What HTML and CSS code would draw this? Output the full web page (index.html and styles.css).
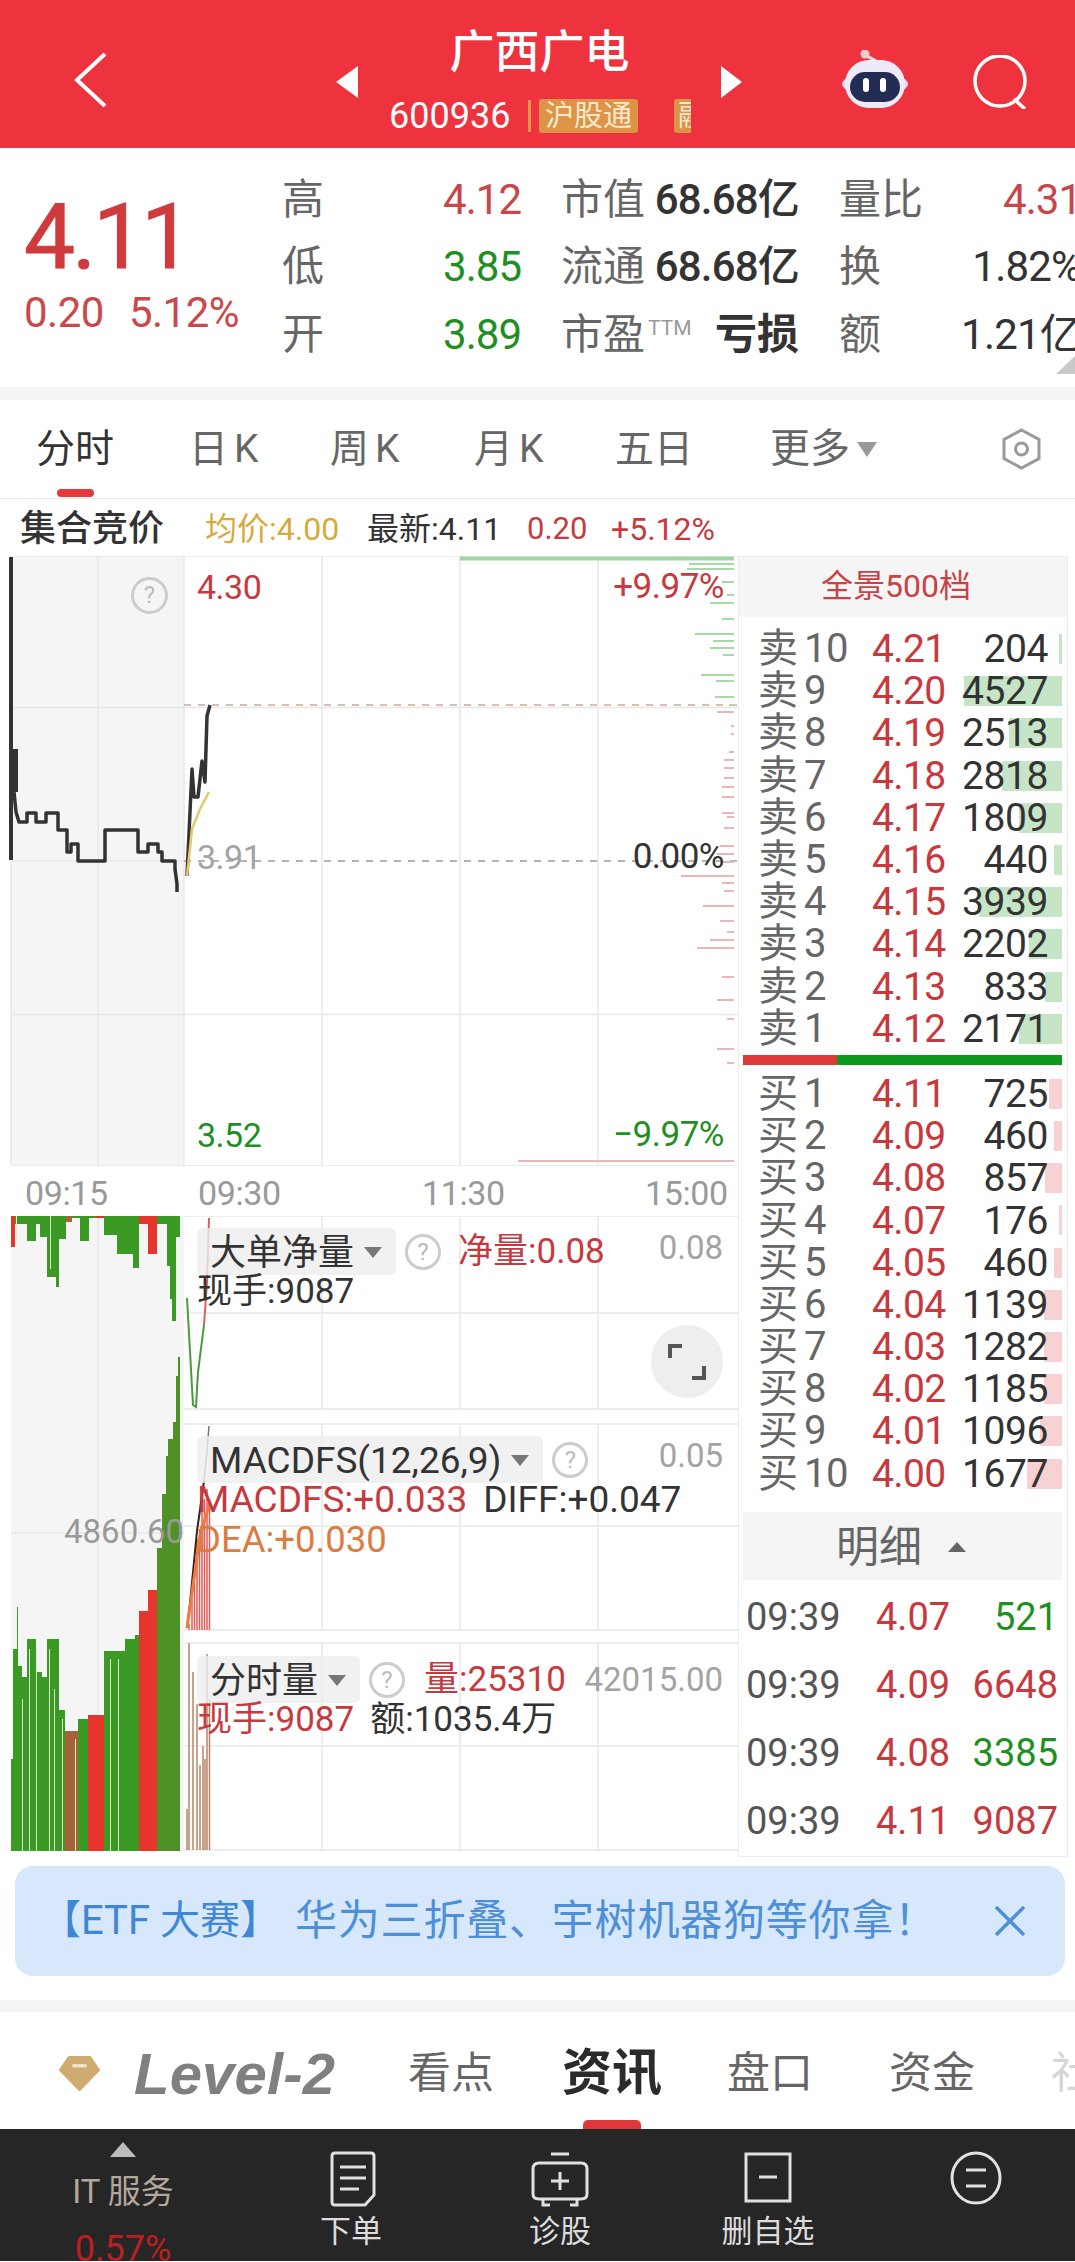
FILE: index.html
```html
<!DOCTYPE html>
<html lang="zh">
<head>
<meta charset="utf-8">
<title>广西广电</title>
<link rel="stylesheet" href="styles.css">
</head>
<body>
<div class="page">
  <header class="nav">
    <svg class="back" viewBox="0 0 33 56"><path d="M31 2 3 28l28 26"/></svg>
    <span class="arrow arrow-l"></span>
    <div class="stock">
      <div class="stock-name">广西广电</div>
      <div class="stock-code"><span class="code">600936</span><span class="code-sep"></span><span class="badge">沪股通</span><span class="badge badge-cut">融资</span></div>
    </div>
    <span class="arrow arrow-r"></span>
    <svg class="robot" viewBox="0 0 66 60">
      <path class="robot-ant" d="M23 4C26 8 30 8 34 11"/>
      <circle class="robot-ball" cx="23" cy="4" r="4.500"/>
      <ellipse class="robot-ear" cx="33" cy="34" rx="33" ry="12"/>
      <rect class="robot-head" x="3" y="10" width="60" height="48" rx="24"/>
      <rect class="robot-face" x="8" y="22" width="50" height="30" rx="15"/>
      <rect class="robot-eye" x="21" y="28" width="6" height="14" rx="3"/>
      <rect class="robot-eye" x="38" y="28" width="6" height="14" rx="3"/>
    </svg>
    <svg class="search" viewBox="0 0 56 54"><circle cx="28" cy="26" r="25"/><path d="M42 44l11 10"/></svg>
  </header>

  <section class="quote">
    <div class="price">
      <div class="price-now">4.11</div>
      <div class="price-chg"><span>0.20</span><span>5.12%</span></div>
    </div>
    <div class="stats">
      <div class="stat"><span class="k">高</span><span class="v red">4.12</span></div>
      <div class="stat"><span class="k">市值</span><span class="v dark">68.68亿</span></div>
      <div class="stat"><span class="k">量比</span><span class="v red">4.31</span></div>
      <div class="stat"><span class="k">低</span><span class="v green">3.85</span></div>
      <div class="stat"><span class="k">流通</span><span class="v dark">68.68亿</span></div>
      <div class="stat"><span class="k">换</span><span class="v plain">1.82%</span></div>
      <div class="stat"><span class="k">开</span><span class="v green">3.89</span></div>
      <div class="stat"><span class="k">市盈<sup class="ttm">TTM</sup></span><span class="v dark strong">亏损</span></div>
      <div class="stat"><span class="k">额</span><span class="v plain">1.21亿</span></div>
    </div>
    <span class="corner"></span>
  </section>
  <div class="band"></div>

  <nav class="tabs">
    <div class="tab tab-on">分时<i class="tab-line"></i></div>
    <div class="tab tab-k">日K</div>
    <div class="tab tab-k">周K</div>
    <div class="tab tab-k">月K</div>
    <div class="tab">五日</div>
    <div class="tab tab-more">更多<i class="caret"></i></div>
    <svg class="hex" viewBox="0 0 43 42"><path d="M21.500 2 39 11.500v19L21.500 40 4 30.500v-19z"/><circle cx="21.500" cy="21" r="6"/></svg>
  </nav>

  <div class="info">
    <span class="info-title">集合竞价</span>
    <span class="info-avg">均价:4.00</span>
    <span class="info-new">最新:4.11</span>
    <span class="info-chg">0.20</span>
    <span class="info-pct">+5.12%</span>
  </div>

  <div class="board">
    <div class="charts">
      <div class="main-chart">
        <svg class="fill" viewBox="0 557 738 610">
          <rect class="shade" x="11" y="557" width="173" height="610"/>
          <path class="grid" d="M11 557V1167M98 557V1167M184 557V1167M322 557V1167M460 557V1167M598 557V1167M11 557H738M11 708.500H738M11 862H184M11 1015.500H738M11 1167H738"/>
          <path class="dash" d="M184 862H738"/>
          <path class="dash dash-warm" d="M184 706H738"/>
          <path class="depth-green-top" d="M460 559.500H734"/>
          <path class="depth-green" d="M689 565H734M687 570H734M722 583H734M727 596H734M710 604H734M722 620H734M695 635H734M713 642H734M710 649H734M723 656H734M701 676H734M716 682H734M715 698H734M729 706H734"/>
          <path class="depth-red" d="M717 713H734M731 727H734M731 735H734M729 753H734M724 761H734M724 769H734M724 779H734M722 788H734M722 798H734M722 814H734M727 818H734M724 829H734M720 847H734M717 855H734M720 863H734M681 877H734M722 884H734M724 892H734M703 907H734M720 922H734M727 933H734M710 941H734M697 949H734M722 978H734M717 1001H734M727 1020H734M717 1050H734M727 1064H734M518 1162H734"/>
          <path class="line-main" d="M11 558V861"/>
          <path class="line-main line-block" d="M14 750V793"/>
          <path class="line-price" d="M14 793 16 813 19 823H27V814H36V823H46V814H58V831H67V853H71V845H78V862H105V831H138V853H148V845H158V853H162V862H175V870L177 885V893"/>
          <path class="line-price" d="M187 877 192 770 194 798H198L202 762 205 783 207 717 210 706"/>
          <path class="line-avg" d="M187 877 192 830 200 810 209 793"/>
        </svg>
        <span class="lab lab-top lab-l red">4.30</span>
        <span class="lab lab-top lab-r red">+9.97%</span>
        <span class="lab lab-mid lab-l grey">3.91</span>
        <span class="lab lab-mid lab-r dark">0.00%</span>
        <span class="lab lab-bot lab-l green">3.52</span>
        <span class="lab lab-bot lab-r green">−9.97%</span>
        <span class="help help-main">?</span>
      </div>
      <div class="axis"><span>09:15</span><span>09:30</span><span>11:30</span><span>15:00</span></div>
      <div class="sub-charts">
        <svg class="fill" viewBox="0 1217 738 641">
          <rect class="shade" x="11" y="1217" width="173" height="635"/>
          <path class="grid" d="M98 1217V1852M322 1217V1410M460 1217V1410M598 1217V1410M322 1425V1631M460 1425V1631M598 1425V1631M322 1644V1852M460 1644V1852M598 1644V1852M184 1217H738M184 1314H738M184 1410H738M184 1425H738M184 1527H738M184 1631H738M184 1644H738M184 1747H738M184 1851H738M11 1534H184"/>
          <path class="bar-green" d="M11 1217H180V1238H176V1322H172V1300H170V1267H167V1225H157V1217H139V1269H133V1255H117V1236H104V1219H89V1242H80V1219H72V1223H66V1240H59V1288H56V1278H47V1238H40V1225H36V1242H27V1225H15V1217Z"/>
          <path class="bar-red" d="M11 1217H15V1248H11ZM95 1217H104V1219H95ZM139 1217H148V1225H139ZM148 1217H157V1255H148Z"/>
          <path class="bar-brown" d="M66 1217H72V1223H66Z"/>
          <path class="bar-green" d="M11 1852V1760H13V1650H17V1608H18V1667H22V1678H27V1640H36V1673H42V1678H47V1640H59V1711H65V1852ZM78 1852V1720H88V1852ZM104 1852V1652H125V1640H135V1636H139V1852Z"/>
          <path class="bar-brown" d="M65 1852V1732H78V1852ZM139 1852V1636H157V1549H162V1852Z"/>
          <path class="bar-red" d="M88 1852V1716H104V1852ZM139 1852V1612H148V1591H157V1852Z"/>
          <path class="bar-olive" d="M157 1852V1549H162V1495H166V1457H168V1440H173V1423H176V1377H178V1358H180V1852Z"/>
          <path class="bar-gap" d="M22.500 1700V1852M29.500 1650V1852M36.500 1650V1852M49.500 1650V1852M54.500 1690V1852M62.500 1720V1852M75.500 1740V1852M110.500 1660V1852M118.500 1660V1852M50.500 1217V1270M16.500 1217V1240"/>
          <path class="curve-green" d="M187 1299 193 1406 196 1408 198 1373 204 1326"/>
          <path class="curve-red" d="M204 1326 207 1284 209 1219"/>
          <path class="macd-bars" d="M189 1631V1625M192 1631V1600M194.500 1631V1575M197 1631V1540M199.500 1631V1530M202 1631V1510M204.500 1631V1500M207 1631V1490M209.500 1631V1500"/>
          <path class="curve-black" d="M187 1629 190 1604 197 1532 200 1511 204 1482"/>
          <path class="curve-grey" d="M204 1482 207 1452 209 1427"/>
          <path class="curve-orange" d="M187 1629 200 1537 210 1503"/>
          <path class="vol-bars" d="M187 1851V1810M189 1851V1644M193 1851V1673M197 1851V1705M200 1851V1766M203 1851V1747M205 1851V1760M207 1851V1655M209.500 1851V1700"/>
        </svg>
        <span class="lab-left">4860.60</span>

        <div class="legend legend-1">
          <div class="legend-top">
            <span class="pill">大单净量<i class="pill-caret"></i></span>
            <span class="help">?</span>
            <span class="lg red">净量:0.08</span>
          </div>
          <div class="lg dark">现手:9087</div>
        </div>
        <span class="scale scale-1">0.08</span>
        <div class="expand"><svg viewBox="0 0 38 38"><path d="M2 15V3H14M36 23V35H24"/></svg></div>

        <div class="legend legend-2">
          <div class="legend-top">
            <span class="pill">MACDFS(12,26,9)<i class="pill-caret"></i></span>
            <span class="help">?</span>
          </div>
          <div class="legend-row"><span class="lg red">MACDFS:+0.033</span><span class="lg dark">DIFF:+0.047</span></div>
          <div class="lg orange legend-dea">DEA:+0.030</div>
        </div>
        <span class="scale scale-2">0.05</span>

        <div class="legend legend-3">
          <div class="legend-top">
            <span class="pill">分时量<i class="pill-caret"></i></span>
            <span class="help">?</span>
            <span class="lg red">量:25310</span>
          </div>
          <div class="legend-row"><span class="lg red">现手:9087</span><span class="lg dark">额:1035.4万</span></div>
        </div>
        <span class="scale scale-3">42015.00</span>
      </div>
    </div>

    <aside class="book">
      <div class="book-head">全景500档</div>
      <div class="levels levels-sell">
        <div class="lv"><i class="lv-bar bar-sell" style="width:3px"></i><span class="lv-name">卖<b>10</b></span><span class="lv-price">4.21</span><span class="lv-qty">204</span></div>
        <div class="lv"><i class="lv-bar bar-sell" style="width:98px"></i><span class="lv-name">卖<b>9</b></span><span class="lv-price">4.20</span><span class="lv-qty">4527</span></div>
        <div class="lv"><i class="lv-bar bar-sell" style="width:53px"></i><span class="lv-name">卖<b>8</b></span><span class="lv-price">4.19</span><span class="lv-qty">2513</span></div>
        <div class="lv"><i class="lv-bar bar-sell" style="width:60px"></i><span class="lv-name">卖<b>7</b></span><span class="lv-price">4.18</span><span class="lv-qty">2818</span></div>
        <div class="lv"><i class="lv-bar bar-sell" style="width:43px"></i><span class="lv-name">卖<b>6</b></span><span class="lv-price">4.17</span><span class="lv-qty">1809</span></div>
        <div class="lv"><i class="lv-bar bar-sell" style="width:8px"></i><span class="lv-name">卖<b>5</b></span><span class="lv-price">4.16</span><span class="lv-qty">440</span></div>
        <div class="lv"><i class="lv-bar bar-sell" style="width:83px"></i><span class="lv-name">卖<b>4</b></span><span class="lv-price">4.15</span><span class="lv-qty">3939</span></div>
        <div class="lv"><i class="lv-bar bar-sell" style="width:33px"></i><span class="lv-name">卖<b>3</b></span><span class="lv-price">4.14</span><span class="lv-qty">2202</span></div>
        <div class="lv"><i class="lv-bar bar-sell" style="width:17px"></i><span class="lv-name">卖<b>2</b></span><span class="lv-price">4.13</span><span class="lv-qty">833</span></div>
        <div class="lv"><i class="lv-bar bar-sell" style="width:43px"></i><span class="lv-name">卖<b>1</b></span><span class="lv-price">4.12</span><span class="lv-qty">2171</span></div>
      </div>
      <div class="ratio"><i class="ratio-red"></i><i class="ratio-green"></i></div>
      <div class="levels">
        <div class="lv"><i class="lv-bar bar-buy" style="width:13px"></i><span class="lv-name">买<b>1</b></span><span class="lv-price">4.11</span><span class="lv-qty">725</span></div>
        <div class="lv"><i class="lv-bar bar-buy" style="width:8px"></i><span class="lv-name">买<b>2</b></span><span class="lv-price">4.09</span><span class="lv-qty">460</span></div>
        <div class="lv"><i class="lv-bar bar-buy" style="width:17px"></i><span class="lv-name">买<b>3</b></span><span class="lv-price">4.08</span><span class="lv-qty">857</span></div>
        <div class="lv"><i class="lv-bar bar-buy" style="width:3px"></i><span class="lv-name">买<b>4</b></span><span class="lv-price">4.07</span><span class="lv-qty">176</span></div>
        <div class="lv"><i class="lv-bar bar-buy" style="width:8px"></i><span class="lv-name">买<b>5</b></span><span class="lv-price">4.05</span><span class="lv-qty">460</span></div>
        <div class="lv"><i class="lv-bar bar-buy" style="width:18px"></i><span class="lv-name">买<b>6</b></span><span class="lv-price">4.04</span><span class="lv-qty">1139</span></div>
        <div class="lv"><i class="lv-bar bar-buy" style="width:18px"></i><span class="lv-name">买<b>7</b></span><span class="lv-price">4.03</span><span class="lv-qty">1282</span></div>
        <div class="lv"><i class="lv-bar bar-buy" style="width:18px"></i><span class="lv-name">买<b>8</b></span><span class="lv-price">4.02</span><span class="lv-qty">1185</span></div>
        <div class="lv"><i class="lv-bar bar-buy" style="width:22px"></i><span class="lv-name">买<b>9</b></span><span class="lv-price">4.01</span><span class="lv-qty">1096</span></div>
        <div class="lv"><i class="lv-bar bar-buy" style="width:35px"></i><span class="lv-name">买<b>10</b></span><span class="lv-price">4.00</span><span class="lv-qty">1677</span></div>
      </div>
      <div class="detail-head">明细<i class="detail-caret"></i></div>
      <div class="ticks">
        <div class="tick"><span class="tick-time">09:39</span><span class="tick-price">4.07</span><span class="tick-qty green">521</span></div>
        <div class="tick"><span class="tick-time">09:39</span><span class="tick-price">4.09</span><span class="tick-qty red">6648</span></div>
        <div class="tick"><span class="tick-time">09:39</span><span class="tick-price">4.08</span><span class="tick-qty green">3385</span></div>
        <div class="tick"><span class="tick-time">09:39</span><span class="tick-price">4.11</span><span class="tick-qty red">9087</span></div>
      </div>
    </aside>
  </div>

  <div class="banner">
    <span class="banner-lead">【ETF 大赛】</span>
    <span class="banner-text">华为三折叠、宇树机器狗等你拿！</span>
    <svg class="banner-x" viewBox="0 0 32 30"><path d="M2 1 30 29M30 1 2 29"/></svg>
  </div>
  <div class="band band-2"></div>

  <nav class="news-tabs">
    <svg class="gem" viewBox="0 0 41 35"><path d="M10 1.500H31L39.500 14 20.500 33.500 1.500 14Z"/><rect x="13" y="8" width="15" height="3.500" rx="1.700"/></svg>
    <span class="level2">Level-2</span>
    <span class="news-tab news-first">看点</span>
    <span class="news-tab news-on">资讯<i class="news-line"></i></span>
    <span class="news-tab">盘口</span>
    <span class="news-tab">资金</span>
    <span class="news-tab news-fade">社</span>
  </nav>

  <footer class="foot">
    <div class="foot-sector">
      <i class="foot-tri"></i>
      <span class="foot-name">IT 服务</span>
      <span class="foot-pct">0.57%</span>
    </div>
    <div class="foot-item">
      <svg class="foot-icon" viewBox="0 0 60 56"><path d="M11 5Q11 2 14 2H50Q53 2 53 5V44L44 54H14Q11 54 11 51Z"/><path d="M19 16H45M19 27H45M19 38H38"/></svg>
      <span class="foot-label">下单</span>
    </div>
    <div class="foot-item">
      <svg class="foot-icon" viewBox="0 0 60 56"><path d="M21 3H39"/><path d="M9 12Q3 12 3 18V43Q3 48 9 48H51Q57 48 57 43V18Q57 12 51 12Z"/><path d="M30 21V39M21 30H39M13 49V54H20M47 49V54H40"/></svg>
      <span class="foot-label">诊股</span>
    </div>
    <div class="foot-item">
      <svg class="foot-icon" viewBox="0 0 60 56"><path d="M8 3H52V50H8Z"/><path d="M21 26H39"/></svg>
      <span class="foot-label">删自选</span>
    </div>
    <div class="foot-item">
      <svg class="foot-icon" viewBox="0 0 60 56"><ellipse cx="30" cy="27" rx="24" ry="25"/><path d="M20 19H40M20 35H40"/></svg>
    </div>
  </footer>
</div>
</body>
</html>
```

FILE: styles.css
```css
* { box-sizing: border-box; }
html, body { margin: 0; padding: 0; background: #fff; }
body {
  font-family: Roboto, "Noto Sans CJK SC", sans-serif;
  color: #333;
}
i { display: block; font-style: normal; }
.page { width: 1075px; height: 2262px; overflow: hidden; position: relative; }

.red { color: #c63a3f; }
.green { color: #1f8f24; }
.dark { color: #333; }
.grey { color: #a3a3a3; }
.orange { color: #dc7c42; }

/* nav */
.nav { display: flex; height: 148px; padding-left: 74px; background: #ee333e; border-bottom: 1px solid #d8424a; }
.back { width: 33px; height: 56px; margin-top: 52px; fill: none; stroke: #fff; stroke-width: 4; flex: none; }
.arrow { flex: none; width: 0; height: 0; margin-top: 66px; border-top: 16px solid transparent; border-bottom: 16px solid transparent; }
.arrow-l { margin-left: 229px; border-right: 22px solid #fff; }
.arrow-r { border-left: 21px solid #fff; }
.stock { width: 363px; flex: none; display: flex; flex-direction: column; }
.stock-name { margin-top: 26px; height: 54px; line-height: 54px; font-size: 45px; font-weight: 500; color: #fff; text-align: center; }
.stock-code { display: flex; align-items: center; height: 34px; margin-top: 19px; padding-left: 31px; width: 333px; overflow: hidden; color: #fff; }
.code { font-size: 36px; line-height: 34px; width: 124px; flex: none; }
.code-sep { width: 3px; height: 32px; margin: 0 8px 0 15px; background: #e2964a; flex: none; }
.badge { flex: none; width: 99px; height: 34px; line-height: 34px; text-align: center; font-size: 29px; border-radius: 3px; background: #dd9446; color: #fbe9cf; white-space: nowrap; }
.badge-cut { margin-left: 36px; text-align: left; padding-left: 4px; }
.robot { width: 66px; height: 60px; margin: 50px 0 0 100px; flex: none; }
.robot-ant { fill: none; stroke: #f0dfe6; stroke-width: 3; }
.robot-ball { fill: #f3c9cf; }
.robot-ear { fill: #e3d9ee; }
.robot-head { fill: #efeaf7; }
.robot-face { fill: #232c52; }
.robot-eye { fill: #fff; }
.search { width: 56px; height: 54px; margin: 55px 0 0 64px; fill: none; stroke: #fff; stroke-width: 3.5; flex: none; }

/* quote */
.quote { display: flex; height: 239px; position: relative; overflow: hidden; }
.price { width: 282px; flex: none; padding-left: 24px; }
.price-now { margin-top: 41px; height: 96px; line-height: 96px; font-size: 91px; letter-spacing: -3px; font-weight: 400; color: #cf3a3d; -webkit-text-stroke: 1px #cf3a3d; }
.price-chg { display: flex; gap: 25px; margin-top: 4px; font-size: 42px; letter-spacing: -0.500px; line-height: 48px; color: #c8484b; }
.stats { display: grid; grid-template-columns: 239px 238px 242px; column-gap: 40px; grid-auto-rows: 67.500px; padding-top: 18px; flex: none; }
.stat { display: flex; justify-content: space-between; align-items: center; white-space: nowrap; line-height: 56px; }
.k { font-size: 42px; color: #666; position: relative; }
.v { font-size: 42px; letter-spacing: -1px; }
.v.dark { font-weight: 500; letter-spacing: -0.800px; }
.v.plain { color: #333; letter-spacing: -0.800px; }
.v.red { color: #c94549; }
.v.strong { font-size: 42px; font-weight: 700; letter-spacing: 0; }
.ttm { position: absolute; left: 87px; top: 9px; font-size: 21px; line-height: 24px; color: #999; }
.corner { position: absolute; right: 0; bottom: 13px; width: 0; height: 0; border-left: 19px solid transparent; border-bottom: 18px solid #c9c9c9; }
.band { height: 13px; background: #f5f5f5; }

/* tabs */
.tabs { display: grid; grid-template-columns: 153px 141px 144px 141px 155px 1fr 43px; align-items: center; height: 99px; padding: 0 32px 0 36px; border-bottom: 1px solid #e6e6e6; position: relative; }
.tab { font-size: 39px; color: #666; line-height: 50px; display: flex; align-items: center; position: relative; white-space: nowrap; }
.tab-on { color: #333; }
.tab-k { letter-spacing: 6px; }
.tab-line { position: absolute; left: 21px; top: 65px; width: 37px; height: 8px; border-radius: 4px; background: #e8383d; }
.tab-more { font-size: 40px; }
.caret { margin-left: 7px; width: 0; height: 0; border-left: 10px solid transparent; border-right: 10px solid transparent; border-top: 15px solid #9a9a9a; }
.hex { width: 43px; height: 42px; fill: none; stroke: #999; stroke-width: 3; }

/* info */
.info { display: flex; align-items: center; height: 57px; padding: 3px 0 0 20px; font-size: 32px; line-height: 40px; white-space: nowrap; }
.info-title { font-size: 36px; font-weight: 500; width: 185px; }
.info-avg { color: #d5ab3e; width: 162px; }
.info-new { color: #333; width: 160px; }
.info-chg { color: #c63a3f; width: 84px; font-size: 31px; }
.info-pct { color: #c63a3f; }

/* board */
.board { display: flex; height: 1301px; }
.charts { width: 738px; flex: none; }
.main-chart { position: relative; height: 610px; }
.fill { position: absolute; left: 0; top: 0; width: 738px; height: 100%; display: block; }
.shade { fill: #f5f5f5; }
.grid { fill: none; stroke: #e8e8e8; stroke-width: 1.500; }
.dash { fill: none; stroke: #9b9b9b; stroke-width: 1.500; stroke-dasharray: 7 7; }
.dash-warm { stroke: #c7ad95; }
.depth-green-top { fill: none; stroke: #9fd59f; stroke-width: 4; }
.depth-green { fill: none; stroke: #a5d9a5; stroke-width: 2; }
.depth-red { fill: none; stroke: #ecb5b5; stroke-width: 2; }
.line-main { fill: none; stroke: #333; stroke-width: 4; }
.line-block { stroke-width: 8; }
.line-price { fill: none; stroke: #333; stroke-width: 3.500; stroke-linejoin: round; }
.line-avg { fill: none; stroke: #e6c76d; stroke-width: 2.500; }
.lab { position: absolute; line-height: 36px; font-size: 34px; letter-spacing: -0.500px; }
.lab-l { left: 197px; }
.lab-r { right: 14px; }
.lab-top { top: 13px; }
.lab-mid { top: 283px; }
.lab-bot { top: 561px; }
.lab-r.red, .lab-r.green, .lab-r.dark { font-size: 35px; }
.help { width: 36px; height: 36px; flex: none; border: 3px solid #ccc; border-radius: 50%; color: #bbb; font-size: 24px; line-height: 30px; text-align: center; }
.help-main { position: absolute; left: 131px; top: 21px; width: 37px; height: 37px; }
.axis { display: grid; grid-template-columns: 173px 224px 223px auto; height: 50px; padding: 3px 0 0 25px; align-items: center; font-size: 34px; line-height: 40px; letter-spacing: -0.400px; color: #999; }

.sub-charts { position: relative; height: 641px; }
.bar-green { fill: #3b9a24; }
.bar-red { fill: #e5352c; }
.bar-brown { fill: #a8623a; }
.bar-olive { fill: #4f9127; }
.bar-gap { fill: none; stroke: #d8efce; stroke-width: 1; }
.curve-green { fill: none; stroke: #4b9a3e; stroke-width: 2; }
.curve-red { fill: none; stroke: #d9605f; stroke-width: 2; }
.curve-black { fill: none; stroke: #3a1f1a; stroke-width: 2; }
.curve-grey { fill: none; stroke: #777; stroke-width: 1.500; }
.curve-orange { fill: none; stroke: #ef7a3b; stroke-width: 3; }
.macd-bars { fill: none; stroke: #e25a55; stroke-width: 1.500; }
.vol-bars { fill: none; stroke: #b98467; stroke-width: 1.500; }
.lab-left { position: absolute; left: 64px; top: 300px; line-height: 32px; font-size: 33px; color: #999; }

.legend { position: absolute; left: 197px; white-space: nowrap; }
.legend-1 { top: 12px; }
.legend-2 { top: 220px; }
.legend-3 { top: 440px; }
.legend-top { display: flex; align-items: center; gap: 9px; height: 47px; }
.pill { display: flex; align-items: center; height: 47px; line-height: 44px; padding: 2px 14px 0 13px; border-radius: 6px; background: rgba(238, 238, 238, 0.8); font-size: 36px; color: #333; }
.legend-2 .pill { font-size: 37px; }
.pill-caret { margin-left: 10px; width: 0; height: 0; border-left: 9px solid transparent; border-right: 9px solid transparent; border-top: 11px solid #777; }
.legend-1 .lg.red { margin-left: 8px; }
.legend-3 .legend-top .lg.red { margin-left: 10px; }
.lg { font-size: 35px; line-height: 34px; }
.legend-row { display: flex; gap: 16px; }
.legend-2 .legend-row .lg { font-size: 37px; }
.legend-dea { margin-top: 6px; font-size: 36.500px; }
.scale { position: absolute; right: 15px; font-size: 33px; line-height: 30px; color: #a3a3a3; }
.scale-1 { top: 17px; }
.scale-2 { top: 225px; }
.scale-3 { top: 449px; }
.expand { position: absolute; left: 651px; top: 109px; width: 72px; height: 73px; border-radius: 50%; background: #eeeeee; display: flex; align-items: center; justify-content: center; }
.expand svg { width: 38px; height: 38px; fill: none; stroke: #555; stroke-width: 4; }

/* book */
.book { width: 330px; flex: none; height: 1301px; border: 1px solid #ececec; overflow: hidden; }
.book-head { height: 60px; line-height: 58px; background: #f5f5f5; text-align: center; font-size: 32px; color: #c84345; padding-right: 14px; white-space: nowrap; }
.levels { display: flex; flex-direction: column; }
.levels-sell { margin-top: 11px; }
.lv { position: relative; display: flex; align-items: center; height: 42.200px; line-height: 38px; margin: 0 5px 0 4px; white-space: nowrap; }
.lv-bar { position: absolute; right: 0; top: 6px; height: 30px; }
.bar-sell { background: #c6e5c6; }
.bar-buy { background: #f8d2d2; }
.lv-name { position: relative; width: 129px; padding-left: 15px; flex: none; font-size: 40px; line-height: 38px; color: #666; display: flex; align-items: center; }
.lv-name b { font-weight: 400; font-size: 40px; margin-left: 6px; letter-spacing: -0.500px; }
.lv-price { position: relative; width: 71px; flex: none; font-size: 39px; letter-spacing: -0.600px; color: #c8383c; }
.lv-qty { position: relative; width: 105px; flex: none; text-align: right; font-size: 39px; letter-spacing: -0.400px; color: #333; }
.ratio { display: flex; height: 10px; margin: 5px 5px 8px 4px; }
.ratio-red { width: 94px; background: #df3a37; }
.ratio-green { flex: 1; background: #0c9a1c; }
.detail-head { display: flex; align-items: center; height: 68px; line-height: 56px; margin: 17px 5px 0 4px; padding: 2px 0 0 93px; background: #f4f4f4; font-size: 43px; color: #666; }
.detail-caret { margin-left: 26px; width: 0; height: 0; border-left: 9px solid transparent; border-right: 9px solid transparent; border-bottom: 10px solid #666; }
.ticks { margin-top: 3px; }
.tick { display: flex; align-items: center; height: 68px; line-height: 44px; padding-left: 7px; font-size: 38px; white-space: nowrap; }
.tick-time { width: 130px; color: #555; flex: none; }
.tick-price { width: 71px; color: #c8383c; flex: none; }
.tick-qty { width: 111px; text-align: right; flex: none; }

/* banner */
.banner { display: flex; align-items: center; height: 110px; line-height: 56px; margin: 9px 10px 0 15px; padding: 0 39px 0 26px; border-radius: 18px; background: #d8e8fc; white-space: nowrap; }
.banner-lead { width: 254px; flex: none; font-size: 40px; color: #3f86d6; }
.banner-text { flex: 1; font-size: 42px; letter-spacing: 0.800px; color: #4d8fd8; }
.banner-x { width: 32px; height: 30px; fill: none; stroke: #4d8fd8; stroke-width: 3.500; flex: none; }
.band-2 { margin-top: 24px; height: 12px; }

/* news tabs */
.news-tabs { display: flex; align-items: center; height: 117px; padding: 5px 0 0 59px; position: relative; white-space: nowrap; }
.gem { width: 41px; height: 35px; fill: #cfab70; stroke: #cfab70; stroke-width: 3; stroke-linejoin: round; flex: none; }
.gem rect { fill: #f0e2c8; stroke: none; }
.level2 { margin-left: 34px; width: 274px; font-family: "Liberation Sans", sans-serif; font-size: 58px; letter-spacing: 0.200px; font-weight: 700; font-style: italic; color: #808080; flex: none; }
.news-tab { width: 162px; flex: none; font-size: 43px; color: #666; position: relative; line-height: 60px; }
.news-first { width: 154px; }
.news-on { width: 165px; font-size: 50px; font-weight: 700; color: #2b2b2b; }
.news-fade { color: #d5d5d5; }
.news-line { position: absolute; left: 21px; top: 77px; width: 58px; height: 9px; border-radius: 5px 5px 0 0; background: #e0383a; }

/* foot */
.foot { display: grid; grid-template-columns: 246px 210px 208px 208px 208px; height: 132px; width: 1080px; background: #262626; position: relative; }
.foot-sector { display: flex; flex-direction: column; align-items: center; padding-top: 13px; overflow: hidden; height: 132px; }
.foot-tri { flex: none; width: 0; height: 0; border-left: 13px solid transparent; border-right: 13px solid transparent; border-bottom: 15px solid #bcbcbc; }
.foot-name { margin-top: 15px; line-height: 40px; font-size: 33px; color: #b3a79a; flex: none; }
.foot-pct { margin-top: 17px; line-height: 40px; font-size: 36px; color: #bb2020; flex: none; }
.foot-item { display: flex; flex-direction: column; align-items: center; padding-top: 22px; }
.foot-icon { width: 60px; height: 56px; fill: none; stroke: #e0e0e0; stroke-width: 3; flex: none; }
.foot-label { margin-top: 8px; line-height: 34px; font-size: 31px; color: #dcdcdc; }
```
